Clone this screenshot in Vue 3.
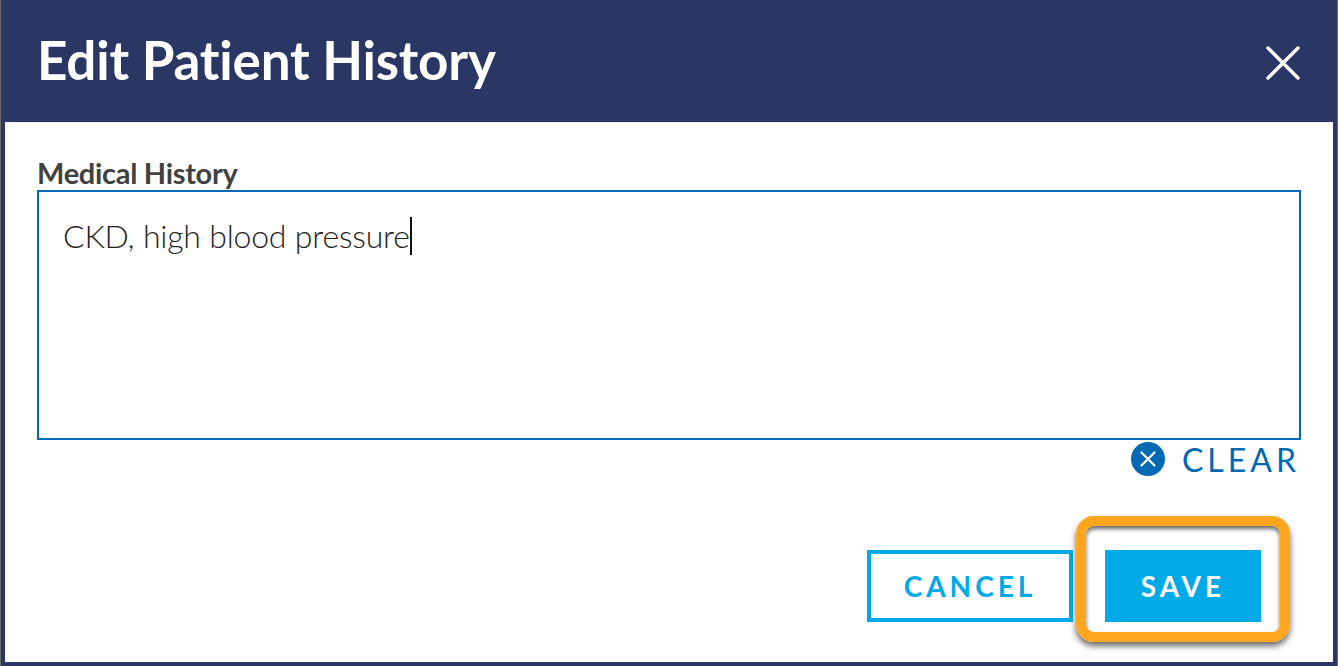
<script setup>
const title = 'Edit Patient History'
const history = 'CKD, high blood pressure'
</script>

<template>
  <div class="page">
    <div class="modal">
      <header class="head">
        <h1>{{ title }}</h1>
        <svg class="close" width="36" height="36" viewBox="0 0 36 36">
          <path d="M3 3L33 33M33 3L3 33" stroke="#fff" stroke-width="3.4" stroke-linecap="round" />
        </svg>
      </header>
      <div class="body">
        <label class="label">Medical History</label>
        <div class="field">
          <span class="value">{{ history }}</span><span class="caret"></span>
        </div>
        <div class="clear-row">
          <svg width="34" height="34" viewBox="0 0 34 34">
            <circle cx="17" cy="17" r="17" fill="#0069b4" />
            <path d="M10.5 10.5L23.5 23.5M23.5 10.5L10.5 23.5" stroke="#fff" stroke-width="2.2" stroke-linecap="round" />
          </svg>
          <span class="clear">CLEAR</span>
        </div>
        <div class="actions">
          <button class="btn cancel">CANCEL</button>
          <div class="save-wrap">
            <button class="btn save">SAVE</button>
            <div class="highlight"></div>
          </div>
        </div>
      </div>
    </div>
  </div>
</template>

<style scoped>
.page {
  width: 1338px;
  height: 666px;
  box-sizing: border-box;
  padding-left: 1px;
  background: #6d6d70;
  font-family: Lato, "Open Sans", sans-serif;
  overflow: hidden;
}
.modal {
  width: 1336px;
  height: 666px;
  box-sizing: border-box;
  background: #2a3663;
  padding: 0 4px 4px 4px;
  display: flex;
  flex-direction: column;
}
.head {
  height: 122px;
  flex: none;
  display: flex;
  align-items: center;
  justify-content: space-between;
  padding: 0 32px 0 32px;
}
.head h1 {
  margin: 0 0 3px;
  font-size: 53px;
  font-weight: 700;
  color: #fff;
  letter-spacing: -0.2px;
}
.close { margin-top: 3px; }
.body {
  flex: 1;
  background: #fff;
  border-top: 1px solid #f1f0ee;
  padding: 34px 32px 0 32px;
}
.label {
  display: block;
  height: 33px;
  font-size: 29px;
  line-height: 32px;
  font-weight: 700;
  color: #414141;
  letter-spacing: -0.3px;
}
.field {
  height: 250px;
  box-sizing: border-box;
  border: 2px solid #0069b4;
  padding: 24px;
  font-size: 32px;
  line-height: 40px;
  font-weight: 300;
  letter-spacing: -0.2px;
  color: #222;
  display: flex;
  align-items: flex-start;
}
.caret {
  width: 2px;
  height: 38px;
  background: #111;
  margin-top: 1px;
}
.clear-row {
  display: flex;
  justify-content: flex-end;
  align-items: center;
  gap: 17px;
  height: 34px;
  margin-top: 2px;
  padding-right: 5px;
}
.clear {
  font-size: 32px;
  letter-spacing: 4px;
  color: #0069b4;
  margin-right: -4px;
}
.actions {
  display: flex;
  justify-content: flex-end;
  margin-top: 74px;
  padding-right: 40px;
}
.btn {
  height: 72px;
  box-sizing: border-box;
  border: 4px solid #00aae7;
  font-family: inherit;
  font-size: 28px;
  font-weight: 700;
  letter-spacing: 4px;
  padding: 0;
}
.cancel {
  width: 206px;
  background: #fff;
  color: #00aae7;
}
.save-wrap {
  position: relative;
  margin-left: 32px;
}
.save {
  display: block;
  width: 156px;
  background: #00aae7;
  color: #fff;
}
.highlight {
  position: absolute;
  left: -29px;
  top: -34px;
  width: 214px;
  height: 126px;
  box-sizing: border-box;
  border: 10px solid #ffa51e;
  border-radius: 18px;
  box-shadow: 0 4px 6px rgba(0, 0, 0, 0.6), inset 0 3px 4px rgba(0, 0, 0, 0.6);
}
</style>
